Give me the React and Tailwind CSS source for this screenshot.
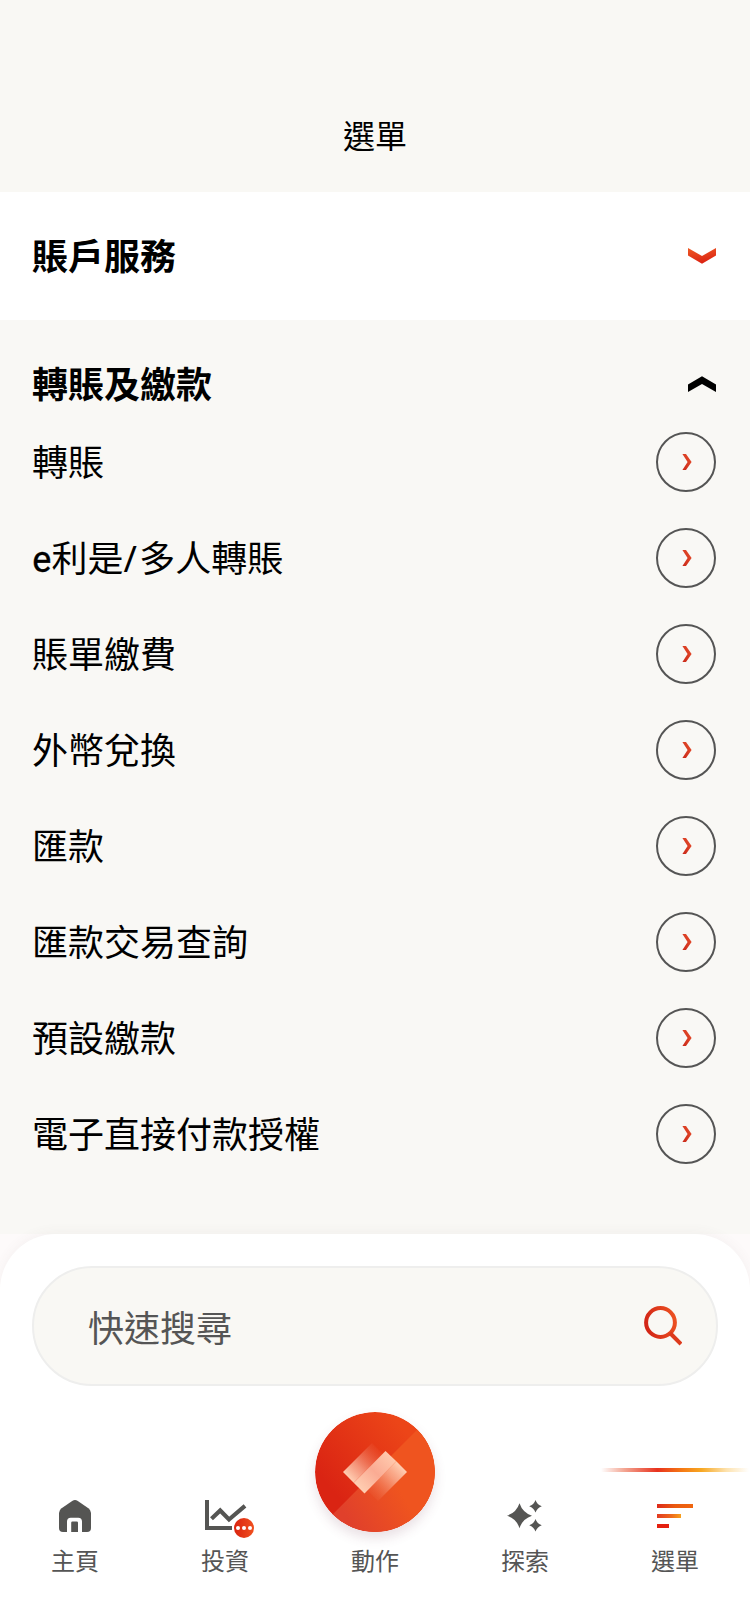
import React from "react";

const items = [
  "轉賬",
  "e利是/多人轉賬",
  "賬單繳費",
  "外幣兌換",
  "匯款",
  "匯款交易查詢",
  "預設繳款",
  "電子直接付款授權",
];

function Chevron({ up }) {
  return (
    <svg width="28" height="16" viewBox="0 0 28 16" className={up ? "rotate-180" : ""}>
      <defs>
        <linearGradient id="chevron" x1="0" y1="0" x2="0.3" y2="1">
          <stop offset="0" stopColor="#ee5a24" />
          <stop offset="1" stopColor="#dc2413" />
        </linearGradient>
      </defs>
      <path d="M0 0 14 8 28 0V7.5L14 15.7 0 7.5Z" fill={up ? "#000" : "url(#chevron)"} />
    </svg>
  );
}

function CircleArrow() {
  return (
    <span className="flex size-[60px] items-center justify-center rounded-full border-2 border-[#555]">
      <svg width="10" height="16" viewBox="0 0 10 16" className="mb-px ml-[2px]">
        <defs>
          <linearGradient id="arrow" x1="0" y1="1" x2="1" y2="0">
            <stop offset="0" stopColor="#c9281a" />
            <stop offset="1" stopColor="#e8502c" />
          </linearGradient>
        </defs>
        <path d="M0.4 0H4L9.6 8 4 16H0.4L5.6 8Z" fill="url(#arrow)" />
      </svg>
    </span>
  );
}

function Label({ text }) {
  return text.split(/([e/])/).map((part, i) => {
    if (part === "e")
      return (
        <span key={i} className="ml-[0.3px] font-['Roboto'] leading-none [-webkit-text-stroke:0.3px_black]">
          e
        </span>
      );
    if (part === "/")
      return (
        <span key={i} className="mr-[2.2px] ml-[0.2px] font-['Noto_Sans'] leading-none">
          /
        </span>
      );
    return part;
  });
}

function HomeIcon() {
  return (
    <svg width="32" height="32" viewBox="0 0 32 32" fill="#555553">
      <path d="M13.2 1Q16-.8 18.8 1L29.4 8.2Q32 10 32 13V28Q32 32 28 32H4Q0 32 0 28V13Q0 10 2.6 8.2Z" />
      <path d="M8 32V21.5Q8 17.7 11.8 17.7H19.2Q23 17.7 23 21.5V32H19V22.8Q19 21.6 17.8 21.6H13.4Q12.2 21.6 12.2 22.8V32Z" fill="#fff" />
    </svg>
  );
}

function InvestIcon() {
  return (
    <svg width="50" height="40" viewBox="0 0 50 40" fill="none">
      <defs>
        <linearGradient id="badge" x1="0" y1="0" x2="1" y2="0">
          <stop offset="0" stopColor="#d9230f" />
          <stop offset="1" stopColor="#f0501f" />
        </linearGradient>
      </defs>
      <path d="M2 0V28H27" stroke="#555553" strokeWidth="4" />
      <path d="M6.5 18.8 15.2 10.5 24 19.5 40 5.8" stroke="#555553" strokeWidth="4.2" />
      <circle cx="39" cy="28" r="11" fill="#fff" />
      <circle cx="39" cy="28" r="10" fill="url(#badge)" />
      <g fill="#fff">
        <circle cx="33" cy="28" r="2" />
        <circle cx="39" cy="28" r="2" />
        <circle cx="45" cy="28" r="2" />
      </g>
    </svg>
  );
}

function ExploreIcon() {
  return (
    <svg width="36" height="32" viewBox="0 0 36 32" fill="#555553">
      <path d="M12.5 3.2Q15.6 12.6 25 15.7 15.6 18.8 12.5 28.2 9.4 18.8 0 15.7 9.4 12.6 12.5 3.2Z" />
      <path d="M28.5 0Q30.1 4.7 34.8 6.3 30.1 7.9 28.5 12.6 26.9 7.9 22.2 6.3 26.9 4.7 28.5 0Z" />
      <path d="M28.5 19Q30.1 23.7 34.8 25.3 30.1 26.9 28.5 31.6 26.9 26.9 22.2 25.3 26.9 23.7 28.5 19Z" />
    </svg>
  );
}

function MenuIcon() {
  return (
    <svg width="36" height="24" viewBox="0 0 36 24">
      <defs>
        <linearGradient id="line1">
          <stop offset="0" stopColor="#dd2a1b" />
          <stop offset="0.5" stopColor="#ea5a10" />
          <stop offset="1" stopColor="#f0660f" />
        </linearGradient>
        <linearGradient id="line2">
          <stop offset="0" stopColor="#e23a22" />
          <stop offset="0.6" stopColor="#ee6a1c" />
          <stop offset="1" stopColor="#f7a01c" />
        </linearGradient>
      </defs>
      <rect width="36" height="4" fill="url(#line1)" />
      <rect y="10" width="24" height="4" fill="url(#line2)" />
      <rect y="20" width="12" height="4" fill="#e4200f" />
    </svg>
  );
}

function ActionButton() {
  return (
    <svg width="120" height="120" viewBox="0 0 120 120" className="rounded-full shadow-[0_6px_12px_rgba(120,60,90,0.16)]">
      <defs>
        <linearGradient id="disc" x1="0.1" y1="0.6" x2="0.7" y2="0.1">
          <stop offset="0" stopColor="#da2413" />
          <stop offset="1" stopColor="#ec4518" />
        </linearGradient>
        <linearGradient id="half" x1="0.1" y1="0.8" x2="0.6" y2="0.5">
          <stop offset="0" stopColor="#e0402b" />
          <stop offset="1" stopColor="#ef541f" />
        </linearGradient>
        <linearGradient id="foldTop" gradientUnits="userSpaceOnUse" x1="33" y1="65" x2="63" y2="35">
          <stop offset="0" stopColor="#ffceb2" />
          <stop offset="0.35" stopColor="#fbb49a" stopOpacity="0.75" />
          <stop offset="1" stopColor="#f08060" stopOpacity="0.05" />
        </linearGradient>
        <linearGradient id="foldBottom" gradientUnits="userSpaceOnUse" x1="87" y1="55" x2="57" y2="85">
          <stop offset="0" stopColor="#ffceb2" />
          <stop offset="0.35" stopColor="#fbb49a" stopOpacity="0.75" />
          <stop offset="1" stopColor="#f08060" stopOpacity="0.05" />
        </linearGradient>
        <linearGradient id="band" gradientUnits="userSpaceOnUse" x1="44" y1="76" x2="76" y2="44">
          <stop offset="0" stopColor="#ffceb2" />
          <stop offset="0.5" stopColor="#faab93" />
          <stop offset="1" stopColor="#ffc9ad" />
        </linearGradient>
      </defs>
      <circle cx="60" cy="60" r="60" fill="url(#disc)" />
      <path d="M17.57 102.43A60 60 0 0 0 102.43 17.57Z" fill="url(#half)" />
      <path d="M28 60 57 31 67.7 41.7 38.7 70.7Z" fill="url(#foldTop)" />
      <path d="M92 60 63 89 52.3 78.3 81.3 49.3Z" fill="url(#foldBottom)" />
      <path d="M38.7 70.7 70.5 38.9 81.3 49.3 49.5 81.5Z" fill="url(#band)" />
    </svg>
  );
}

function Tab({ label, children }) {
  return (
    <div className="flex w-[150px] flex-col items-center">
      <div className="flex h-[139px] w-full justify-center">{children}</div>
      <span className="text-2xl leading-[36px] text-[#555]">{label}</span>
    </div>
  );
}

export default function App() {
  return (
    <div className="flex h-[1624px] w-[750px] flex-col overflow-hidden bg-white font-['Noto_Sans_CJK_TC','Noto_Sans_CJK_SC',sans-serif] text-black">
      <header className="flex h-[192px] shrink-0 items-end justify-center bg-[#f9f8f4] pb-[34px]">
        <h1 className="text-[32px] leading-[48px]">選單</h1>
      </header>

      <section className="flex h-32 shrink-0 items-center justify-between bg-white pr-[34px] pl-8">
        <h2 className="pb-1 text-4xl leading-[54px] font-bold">賬戶服務</h2>
        <Chevron />
      </section>

      <main className="h-[914px] shrink-0 bg-[#f9f8f5]">
        <div className="flex h-[94px] items-start justify-between pt-[35px] pr-[34px] pl-8">
          <h2 className="text-4xl leading-[54px] font-bold">轉賬及繳款</h2>
          <div className="pt-[21px]">
            <Chevron up />
          </div>
        </div>
        <ul>
          {items.map((item) => (
            <li key={item} className="flex h-24 items-center justify-between pr-[34px] pl-8">
              <span className="pb-1 text-4xl leading-[54px]">
                <Label text={item} />
              </span>
              <CircleArrow />
            </li>
          ))}
        </ul>
      </main>

      <div className="h-[390px] shrink-0 bg-[#fdfafa]">
        <div className="h-full rounded-t-[56px] bg-white px-8 pt-8 shadow-[0_-2px_12px_rgba(90,80,80,0.05)]">
          <div className="flex h-[120px] w-[686px] items-center justify-between rounded-full border-2 border-[#eeeeed] bg-[#f9f8f4] pr-[34px] pl-[54px]">
            <span className="text-4xl leading-[54px] text-[#555]">快速搜尋</span>
            <svg width="40" height="40" viewBox="0 0 40 40" fill="none">
              <defs>
                <linearGradient id="search" gradientUnits="userSpaceOnUse" x1="0" y1="20" x2="36" y2="12">
                  <stop offset="0" stopColor="#cf2015" />
                  <stop offset="1" stopColor="#ee5422" />
                </linearGradient>
              </defs>
              <circle cx="18.5" cy="16.5" r="14.4" stroke="url(#search)" strokeWidth="4" />
              <path d="M28 27 39 38" stroke="#dd3a1c" strokeWidth="4" />
            </svg>
          </div>

          <nav className="-mx-8 mt-[17px] flex">
            <Tab label="主頁">
              <div className="pt-[97px]">
                <HomeIcon />
              </div>
            </Tab>
            <Tab label="投資">
              <div className="pt-[97px] pl-[10px]">
                <InvestIcon />
              </div>
            </Tab>
            <Tab label="動作">
              <div className="pt-[9px]">
                <ActionButton />
              </div>
            </Tab>
            <Tab label="探索">
              <div className="pt-[97px]">
                <ExploreIcon />
              </div>
            </Tab>
            <Tab label="選單">
              <div className="flex w-full flex-col items-center pt-[65px]">
                <div className="h-1 w-[148px] bg-[linear-gradient(90deg,transparent_0%,#f3a592_16%,#e8321e_38%,#f57a14_55%,#f7a823_68%,#fde3b0_85%,transparent_100%)]" />
                <div className="pt-8">
                  <MenuIcon />
                </div>
              </div>
            </Tab>
          </nav>
        </div>
      </div>
    </div>
  );
}
